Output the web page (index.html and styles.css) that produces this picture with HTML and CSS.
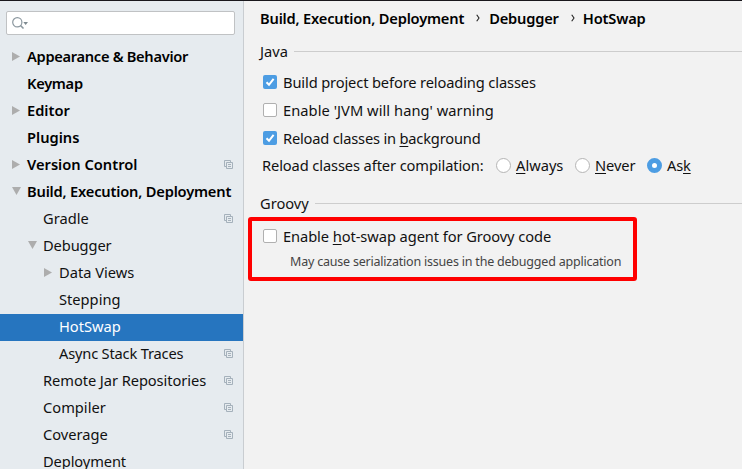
FILE: index.html
```
<!DOCTYPE html>
<html lang="en">
<head>
<meta charset="utf-8">
<title>Settings</title>
<link rel="stylesheet" href="styles.css">
</head>
<body>
<svg class="defs" width="0" height="0">
  <symbol id="copy" viewBox="0 0 9 9"><path d="M2 6.5H.5V.5h6V2M2.500 2.500h6v6h-6zM4 4.500h3M4 6.500h3" fill="none" stroke="#a5b1bb"/></symbol>
  <symbol id="right" viewBox="0 0 8 9"><path d="M0 0L8 4.500L0 9z" fill="#adadad"/></symbol>
  <symbol id="down" viewBox="0 0 9 8"><path d="M0 0H9L4.500 8z" fill="#adadad"/></symbol>
  <symbol id="tick" viewBox="0 0 14 14"><path d="M3.500 7.200L6 9.800L10.600 3.800" fill="none" stroke="#fff" stroke-width="2"/></symbol>
  <symbol id="sep" viewBox="0 0 4 8"><path d="M.7 .7L3 4L.7 7.300" fill="none" stroke="#222" stroke-width="1.100"/></symbol>
</svg>
<div class="window">
  <aside class="sidebar">
    <div class="search">
      <svg width="17" height="13" viewBox="0 0 17 13"><circle cx="5.300" cy="5.300" r="4.600" fill="none" stroke="#8b979f" stroke-width="1.200"/><path d="M8.500 8.500L11.500 11.500" stroke="#8b979f" stroke-width="1.600"/><path d="M11.300 5h4.700l-2.350 3z" fill="#7f8b91"/></svg>
    </div>
    <nav class="tree">
      <div class="row top"><svg class="arrow right"><use href="#right"/></svg><span class="tighter">Appearance &amp; Behavior</span></div>
      <div class="row top"><span class="tighter">Keymap</span></div>
      <div class="row top"><svg class="arrow right"><use href="#right"/></svg><span>Editor</span></div>
      <div class="row top"><span>Plugins</span></div>
      <div class="row top"><svg class="arrow right"><use href="#right"/></svg><span>Version Control</span><svg class="copy"><use href="#copy"/></svg></div>
      <div class="row top"><svg class="arrow down"><use href="#down"/></svg><span class="tight">Build, Execution, Deployment</span></div>
      <div class="row second"><span>Gradle</span><svg class="copy"><use href="#copy"/></svg></div>
      <div class="row second"><svg class="arrow down"><use href="#down"/></svg><span class="snug">Debugger</span></div>
      <div class="row third"><svg class="arrow right"><use href="#right"/></svg><span>Data Views</span></div>
      <div class="row third"><span>Stepping</span></div>
      <div class="row third selected"><span>HotSwap</span></div>
      <div class="row third"><span class="tight">Async Stack Traces</span><svg class="copy"><use href="#copy"/></svg></div>
      <div class="row second"><span class="remote">Remote Jar Repositories</span><svg class="copy"><use href="#copy"/></svg></div>
      <div class="row second"><span>Compiler</span><svg class="copy"><use href="#copy"/></svg></div>
      <div class="row second"><span>Coverage</span><svg class="copy"><use href="#copy"/></svg></div>
      <div class="row second"><span class="snug">Deployment</span></div>
    </nav>
  </aside>
  <main class="content">
    <div class="crumbs"><span class="tight">Build, Execution, Deployment</span><svg class="sep"><use href="#sep"/></svg><span class="tight">Debugger</span><svg class="sep last"><use href="#sep"/></svg><span class="tight">HotSwap</span></div>
    <div class="group java"><span>Java</span></div>
    <div class="options">
      <div class="option"><span class="box on"><svg><use href="#tick"/></svg></span><span class="build">Build project before reloading classes</span></div>
      <div class="option"><span class="box"></span><span class="loose">Enable 'JVM will hang' warning</span></div>
      <div class="option"><span class="box on"><svg><use href="#tick"/></svg></span><span class="tight">Reload classes in <u>b</u>ackground</span></div>
      <div class="option radios"><span class="label snug">Reload classes after compilation:</span>
        <span class="radio"></span><span class="always"><u>A</u>lways</span>
        <span class="radio"></span><span class="never snug"><u>N</u>ever</span>
        <span class="radio on"></span><span class="tight">As<u>k</u></span></div>
    </div>
    <div class="group groovy"><span>Groovy</span></div>
    <section class="highlight">
      <div class="option"><span class="box"></span><span class="agent">Enable <u>h</u>ot-swap agent for Groovy code</span></div>
      <p class="hint">May cause serialization issues in the debugged application</p>
    </section>
  </main>
</div>
</body>
</html>
```
FILE: styles.css
```
* { box-sizing: border-box; }
body { margin: 0; font: 14.67px/20px "Noto Sans", sans-serif; color: #111; background: #f2f2f2; overflow: hidden; }
.defs { position: absolute; }
.window { display: flex; width: 742px; height: 469px; border-top: 1px solid #19171c; overflow: hidden; }
span { white-space: nowrap; }
svg { flex: none; }
.snug { letter-spacing: -0.11px; }
.tight { letter-spacing: -0.19px; }
.tighter { letter-spacing: -0.31px; }
.loose { letter-spacing: 0.05px; }
.remote { letter-spacing: -0.07px; }
.build { letter-spacing: -0.13px; }
.agent { letter-spacing: -0.08px; }
.sidebar { width: 244px; flex: none; background: #e6ebef; border-right: 1px solid #c9cdd1; }
.search { width: 229px; height: 24px; margin: 10px 0 9px 6px; padding: 5px; border: 1px solid #c0c2c4; border-radius: 2px; background: #fff; }
.search svg { display: block; }
.row { display: flex; align-items: center; height: 27px; padding: 0 10px 2px 0; }
.row span { padding-bottom: 2px; }
.row.top { padding-left: 27px; font-weight: 600; color: #000; }
.row.second { padding-left: 43px; }
.row.third { padding-left: 59px; }
.row.selected { background: #2675bf; color: #fff; }
.arrow.right { width: 8px; height: 9px; margin-left: -15px; margin-right: 7px; }
.arrow.down { width: 9px; height: 8px; margin-left: -15px; margin-right: 6px; margin-bottom: 1px; }
.copy { width: 9px; height: 9px; margin-left: auto; }
.content { flex: 1; min-width: 0; padding: 7px 0 0 4px; }
.crumbs { display: flex; align-items: center; height: 20px; padding-left: 12px; font-weight: 600; color: #000; }
.sep { width: 4px; height: 8px; margin: 0 9px 0 12px; }
.sep.last { margin-right: 8px; }
.group { display: flex; align-items: center; height: 20px; padding-left: 12px; gap: 6px; }
.group::after { content: ""; flex: 1; height: 1px; background: #cdcdcd; }
.java { margin-top: 13px; }
.groovy { margin-top: 14px; }
.options { padding: 7px 0 0 15px; }
.option { display: flex; align-items: center; height: 28px; }
.box { width: 14px; height: 14px; flex: none; margin-right: 6px; border: 1px solid #b0b0b0; border-radius: 2px; background: #fff; }
.box.on { border: 0; background: #4d9de3; }
.box svg { display: block; width: 14px; height: 14px; }
u { text-underline-offset: 2px; text-decoration-thickness: 1px; text-decoration-skip-ink: none; }
.radios { height: 27px; margin-left: -1px; padding-bottom: 1px; }
.label { width: 234px; }
.radio { width: 15px; height: 15px; flex: none; margin-right: 5px; border: 1px solid #b5b5b5; border-radius: 50%; background: #fff; }
.radio.on { border: 5px solid #4d9de3; }
.always { width: 59px; }
.never { width: 52px; }
.highlight { width: 389px; height: 64px; margin-top: 4px; padding: 1px 0 0 11px; border: 4px solid #f00; border-radius: 3px; }
.highlight .option { height: 27px; }
.hint { margin: 3px 0 0 27px; font-size: 12.5px; line-height: 20px; letter-spacing: -0.21px; white-space: nowrap; color: #444; }
```
